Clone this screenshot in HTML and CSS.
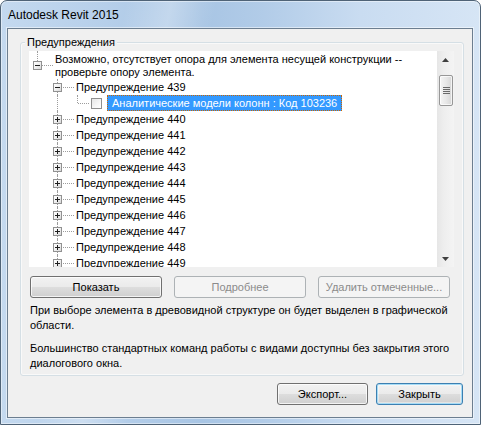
FILE: index.html
```html
<!DOCTYPE html>
<html lang="ru">
<head>
<meta charset="utf-8">
<title>Autodesk Revit 2015</title>
<link rel="stylesheet" href="styles.css">
</head>
<body>
<div class="window">
  <div class="title">Autodesk Revit 2015</div>
  <div class="client">
    <div class="group">
      <div class="legend">Предупреждения</div>
      <div class="tree">
        <div class="tree-body">
          <div class="row row-root">
            <div class="cell up hl hl-root"><span class="exp minus"></span></div>
            <div class="label label-root">Возможно, отсутствует опора для элемента несущей конструкции --<br>проверьте опору элемента.</div>
          </div>
          <div class="row">
            <div class="cell"></div>
            <div class="cell full hl"><span class="exp minus"></span></div>
            <div class="label">Предупреждение 439</div>
          </div>
          <div class="row">
            <div class="cell"></div>
            <div class="cell full"></div>
            <div class="cell up hl hl-leaf"></div>
            <span class="check"></span>
            <div class="label selected">Аналитические модели колонн : Код 103236</div>
          </div>
          <div class="row"><div class="cell"></div><div class="cell full hl"><span class="exp plus"></span></div><div class="label">Предупреждение 440</div></div>
          <div class="row"><div class="cell"></div><div class="cell full hl"><span class="exp plus"></span></div><div class="label">Предупреждение 441</div></div>
          <div class="row"><div class="cell"></div><div class="cell full hl"><span class="exp plus"></span></div><div class="label">Предупреждение 442</div></div>
          <div class="row"><div class="cell"></div><div class="cell full hl"><span class="exp plus"></span></div><div class="label">Предупреждение 443</div></div>
          <div class="row"><div class="cell"></div><div class="cell full hl"><span class="exp plus"></span></div><div class="label">Предупреждение 444</div></div>
          <div class="row"><div class="cell"></div><div class="cell full hl"><span class="exp plus"></span></div><div class="label">Предупреждение 445</div></div>
          <div class="row"><div class="cell"></div><div class="cell full hl"><span class="exp plus"></span></div><div class="label">Предупреждение 446</div></div>
          <div class="row"><div class="cell"></div><div class="cell full hl"><span class="exp plus"></span></div><div class="label">Предупреждение 447</div></div>
          <div class="row"><div class="cell"></div><div class="cell full hl"><span class="exp plus"></span></div><div class="label">Предупреждение 448</div></div>
          <div class="row"><div class="cell"></div><div class="cell full hl"><span class="exp plus"></span></div><div class="label">Предупреждение 449</div></div>
        </div>
        <div class="scrollbar">
          <div class="sb-btn">
            <svg width="7" height="4" viewBox="0 0 7 4"><polygon points="3.5,0 7,4 0,4" fill="#3f3f3f"/></svg>
          </div>
          <div class="sb-track">
            <div class="thumb"><span class="grip"></span></div>
          </div>
          <div class="sb-btn">
            <svg width="7" height="4" viewBox="0 0 7 4"><polygon points="0,0 7,0 3.5,4" fill="#3f3f3f"/></svg>
          </div>
        </div>
      </div>
      <div class="actions">
        <div class="btn btn-wide">Показать</div>
        <div class="btn btn-wide disabled">Подробнее</div>
        <div class="btn btn-wide disabled">Удалить отмеченные...</div>
      </div>
      <p class="note note-first">При выборе элемента в древовидной структуре он будет выделен в графической<br>области.</p>
      <p class="note note-second">Большинство стандартных команд работы с видами доступны без закрытия этого<br>диалогового окна.</p>
    </div>
    <div class="footer">
      <div class="btn btn-export">Экспорт...</div>
      <div class="btn btn-close default">Закрыть</div>
    </div>
  </div>
</div>
</body>
</html>
```
FILE: styles.css
```css
html, body {
  margin: 0;
  padding: 0;
  background: #ffffff;
}
body {
  font-family: "Liberation Sans", Arial, sans-serif;
  font-size: 11px;
  color: #000;
}
.window {
  width: 481px;
  height: 425px;
  box-sizing: border-box;
  border: 1px solid #4f6377;
  border-radius: 7px 7px 0 0;
  padding: 0 7px 6px 6px;
  display: flex;
  flex-direction: column;
  background:
    linear-gradient(102deg, rgba(255,255,255,0) 0%, rgba(255,255,255,0) 22%, rgba(255,255,255,.28) 30%, rgba(255,255,255,0) 38%, rgba(255,255,255,0) 100%),
    linear-gradient(to right, #c4d9ef 0%, #b6cfea 22%, #a8c5e4 42%, #b2cce8 55%, #c9dcf1 75%, #d6e5f5 100%);
  box-shadow: inset 0 0 0 1px rgba(255,255,255,.45);
}
.title {
  height: 27px;
  flex: none;
  line-height: 29px;
  padding-left: 1px;
  font-size: 12px;
  color: #000;
  white-space: nowrap;
}
.client {
  flex: 1;
  border: 1px solid #6c7e90;
  background: #f0f0f0;
  display: flex;
  flex-direction: column;
  box-shadow: 0 0 0 1px rgba(255,255,255,.5);
}
.group {
  margin: 13px 8px 0 12px;
  border: 1px solid #d5dfe5;
  border-radius: 3px;
  padding: 0 9px 4px 8px;
  box-shadow: inset 0 0 0 1px rgba(255,255,255,.6);
}
.legend {
  width: max-content;
  height: 15px;
  line-height: 15px;
  margin: -8px 0 0 -4px;
  padding: 0 2px;
  background: #f0f0f0;
}
.tree {
  margin-top: 1px;
  height: 216px;
  display: flex;
}
.tree-body {
  flex: 1;
  background: #ffffff;
  overflow: hidden;
}
.row {
  display: flex;
  align-items: center;
  height: 16px;
  white-space: nowrap;
}
.row-root {
  height: 28px;
  align-items: stretch;
}
.cell {
  width: 20px;
  height: 100%;
  flex: none;
  position: relative;
}
.cell.full::before,
.cell.up::before {
  content: "";
  position: absolute;
  left: 8px;
  top: 0;
  bottom: 0;
  border-left: 1px dotted #9c9c9c;
}
.cell.up::before {
  bottom: 50%;
}
.cell.hl::after {
  content: "";
  position: absolute;
  left: 9px;
  right: -5px;
  top: 8px;
  border-top: 1px dotted #9c9c9c;
}
.cell.hl-root::after {
  top: 14px;
  right: -4px;
}
.cell.hl-leaf::after {
  right: 0;
}
.exp {
  position: absolute;
  left: 4px;
  top: 4px;
  width: 9px;
  height: 9px;
  box-sizing: border-box;
  border: 1px solid #919191;
  background: linear-gradient(135deg, #ffffff 0%, #f0f0f0 50%, #d8d8d8 100%);
  z-index: 1;
}
.row-root .exp {
  top: 10px;
}
.exp::before {
  content: "";
  position: absolute;
  left: 1px;
  top: 3px;
  width: 5px;
  height: 1px;
  background: #1e1e1e;
}
.exp.plus::after {
  content: "";
  position: absolute;
  left: 3px;
  top: 1px;
  width: 1px;
  height: 5px;
  background: #1e1e1e;
}
.label {
  margin-left: 7px;
  line-height: 16px;
}
.label-root {
  margin-left: 6px;
  line-height: 13px;
  padding-top: 2px;
}
.check {
  flex: none;
  width: 11px;
  height: 11px;
  box-sizing: border-box;
  margin-left: 2px;
  border: 1px solid #8f8f8f;
  background: linear-gradient(135deg, #e6e6e6 0%, #f7f7f7 60%, #ffffff 100%);
}
.label.selected {
  margin-left: 5px;
  height: 16px;
  box-sizing: border-box;
  padding: 0 4px;
  line-height: 14px;
  background: #3399ff;
  color: #ffffff;
  border: 1px dotted #cc6600;
}
.scrollbar {
  width: 17px;
  flex: none;
  display: flex;
  flex-direction: column;
  background: linear-gradient(to right, #e6e6e6 0%, #eeeeee 40%, #f4f4f4 100%);
}
.sb-btn {
  height: 17px;
  flex: none;
  display: flex;
  align-items: center;
  justify-content: center;
}
.sb-btn svg {
  display: block;
}
.sb-track {
  flex: 1;
}
.thumb {
  margin: 7px 1px 0 2px;
  height: 31px;
  box-sizing: border-box;
  border: 1px solid #979797;
  border-radius: 2px;
  background: linear-gradient(to right, #f5f5f5 0%, #e8e8e8 50%, #d6d6d6 100%);
  box-shadow: inset 0 0 0 1px rgba(255,255,255,.7);
  display: flex;
  align-items: center;
  justify-content: center;
}
.grip {
  width: 7px;
  height: 7px;
  background: repeating-linear-gradient(to bottom, #6a6a6a 0px, #6a6a6a 1px, transparent 1px, transparent 2px);
}
.actions {
  display: flex;
  gap: 12px;
  margin: 9px 0 0 1px;
}
.btn {
  height: 22px;
  box-sizing: border-box;
  border: 1px solid #707070;
  border-radius: 3px;
  background: linear-gradient(to bottom, #f2f2f2 0%, #ebebeb 48%, #dddddd 52%, #cfcfcf 100%);
  box-shadow: inset 0 0 0 1px rgba(255,255,255,.75);
  display: flex;
  align-items: center;
  justify-content: center;
  white-space: nowrap;
  color: #000;
}
.btn-wide {
  width: 132px;
}
.btn.disabled {
  border-color: #adb2b5;
  background: #f4f4f4;
  box-shadow: none;
  color: #8b8b8b;
}
.note {
  margin: 0 0 0 1px;
  line-height: 15px;
  white-space: nowrap;
}
.note-first {
  margin-top: 5px;
}
.note-second {
  margin-top: 8px;
}
.footer {
  display: flex;
  justify-content: flex-end;
  gap: 8px;
  margin-top: 7px;
  padding-right: 9px;
}
.btn-export {
  width: 91px;
}
.btn-close {
  width: 87px;
}
.btn.default {
  border-color: #3c7fb1;
  box-shadow: inset 0 0 0 1px #a6dcf6, inset 0 0 0 2px rgba(255,255,255,.4);
}
```
